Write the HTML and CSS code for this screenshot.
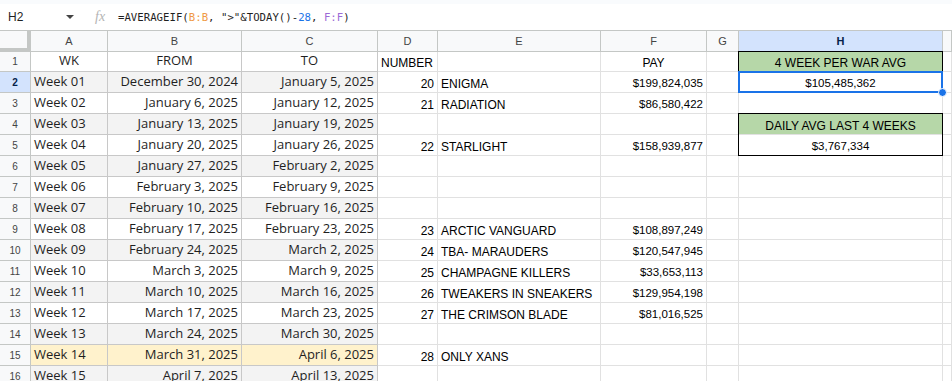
FILE: index.html
```html
<!DOCTYPE html>
<html lang="en">

<head>
    <meta charset="UTF-8">
    <title>Weeks</title>
    <link rel="stylesheet" href="styles.css">
</head>

<body>
    <div class="strip"></div>
    <div class="formula-bar">
        <div class="name-box">H2</div>
        <svg class="caret" width="8" height="4" viewBox="0 0 8 4"><path d="M0 0h8L4 4z" fill="#444"/></svg>
        <div class="fx">fx</div>
        <div class="formula">=AVERAGEIF(<span class="ref-b">B:B</span>, "&gt;"&amp;TODAY()-<span class="num">28</span>, <span class="ref-f">F:F</span>)</div>
    </div>

    <div class="sheet">
        <div class="row head">
            <div class="corner"></div>
            <div class="ch">A</div>
            <div class="ch">B</div>
            <div class="ch">C</div>
            <div class="ch">D</div>
            <div class="ch">E</div>
            <div class="ch">F</div>
            <div class="ch">G</div>
            <div class="ch sel">H</div>
            <div class="ch"></div>
        </div>

        <div class="row first">
            <div class="rh">1</div>
            <div class="c ac m">WK</div>
            <div class="c ac m">FROM</div>
            <div class="c ac m">TO</div>
            <div class="c caps">NUMBER</div>
            <div class="c"></div>
            <div class="c m caps">PAY</div>
            <div class="c"></div>
            <div class="c m caps green box-top">4 WEEK PER WAR AVG</div>
            <div class="c"></div>
        </div>
        <div class="row">
            <div class="rh cur">2</div>
            <div class="c ac band">Week 01</div>
            <div class="c ac band r">December 30, 2024</div>
            <div class="c ac band r">January 5, 2025</div>
            <div class="c r">20</div>
            <div class="c caps">ENIGMA</div>
            <div class="c r money">$199,824,035</div>
            <div class="c"></div>
            <div class="c m money active box-mid">$105,485,362<span class="handle"></span></div>
            <div class="c"></div>
        </div>
        <div class="row">
            <div class="rh">3</div>
            <div class="c ac">Week 02</div>
            <div class="c ac r">January 6, 2025</div>
            <div class="c ac r">January 12, 2025</div>
            <div class="c r">21</div>
            <div class="c caps">RADIATION</div>
            <div class="c r money">$86,580,422</div>
            <div class="c"></div>
            <div class="c"></div>
            <div class="c"></div>
        </div>
        <div class="row">
            <div class="rh">4</div>
            <div class="c ac band">Week 03</div>
            <div class="c ac band r">January 13, 2025</div>
            <div class="c ac band r">January 19, 2025</div>
            <div class="c"></div>
            <div class="c"></div>
            <div class="c"></div>
            <div class="c"></div>
            <div class="c m caps green box-top">DAILY AVG LAST 4 WEEKS</div>
            <div class="c"></div>
        </div>
        <div class="row">
            <div class="rh">5</div>
            <div class="c ac">Week 04</div>
            <div class="c ac r">January 20, 2025</div>
            <div class="c ac r">January 26, 2025</div>
            <div class="c r">22</div>
            <div class="c caps">STARLIGHT</div>
            <div class="c r money">$158,939,877</div>
            <div class="c"></div>
            <div class="c m money box-end">$3,767,334</div>
            <div class="c"></div>
        </div>
        <div class="row">
            <div class="rh">6</div>
            <div class="c ac band">Week 05</div>
            <div class="c ac band r">January 27, 2025</div>
            <div class="c ac band r">February 2, 2025</div>
            <div class="c"></div>
            <div class="c"></div>
            <div class="c"></div>
            <div class="c"></div>
            <div class="c"></div>
            <div class="c"></div>
        </div>
        <div class="row">
            <div class="rh">7</div>
            <div class="c ac">Week 06</div>
            <div class="c ac r">February 3, 2025</div>
            <div class="c ac r">February 9, 2025</div>
            <div class="c"></div>
            <div class="c"></div>
            <div class="c"></div>
            <div class="c"></div>
            <div class="c"></div>
            <div class="c"></div>
        </div>
        <div class="row">
            <div class="rh">8</div>
            <div class="c ac band">Week 07</div>
            <div class="c ac band r">February 10, 2025</div>
            <div class="c ac band r">February 16, 2025</div>
            <div class="c"></div>
            <div class="c"></div>
            <div class="c"></div>
            <div class="c"></div>
            <div class="c"></div>
            <div class="c"></div>
        </div>
        <div class="row">
            <div class="rh">9</div>
            <div class="c ac">Week 08</div>
            <div class="c ac r">February 17, 2025</div>
            <div class="c ac r">February 23, 2025</div>
            <div class="c r">23</div>
            <div class="c caps">ARCTIC VANGUARD</div>
            <div class="c r money">$108,897,249</div>
            <div class="c"></div>
            <div class="c"></div>
            <div class="c"></div>
        </div>
        <div class="row">
            <div class="rh">10</div>
            <div class="c ac band">Week 09</div>
            <div class="c ac band r">February 24, 2025</div>
            <div class="c ac band r">March 2, 2025</div>
            <div class="c r">24</div>
            <div class="c caps">TBA- MARAUDERS</div>
            <div class="c r money">$120,547,945</div>
            <div class="c"></div>
            <div class="c"></div>
            <div class="c"></div>
        </div>
        <div class="row">
            <div class="rh">11</div>
            <div class="c ac">Week 10</div>
            <div class="c ac r">March 3, 2025</div>
            <div class="c ac r">March 9, 2025</div>
            <div class="c r">25</div>
            <div class="c caps">CHAMPAGNE KILLERS</div>
            <div class="c r money">$33,653,113</div>
            <div class="c"></div>
            <div class="c"></div>
            <div class="c"></div>
        </div>
        <div class="row">
            <div class="rh">12</div>
            <div class="c ac band">Week 11</div>
            <div class="c ac band r">March 10, 2025</div>
            <div class="c ac band r">March 16, 2025</div>
            <div class="c r">26</div>
            <div class="c caps">TWEAKERS IN SNEAKERS</div>
            <div class="c r money">$129,954,198</div>
            <div class="c"></div>
            <div class="c"></div>
            <div class="c"></div>
        </div>
        <div class="row">
            <div class="rh">13</div>
            <div class="c ac">Week 12</div>
            <div class="c ac r">March 17, 2025</div>
            <div class="c ac r">March 23, 2025</div>
            <div class="c r">27</div>
            <div class="c caps">THE CRIMSON BLADE</div>
            <div class="c r money">$81,016,525</div>
            <div class="c"></div>
            <div class="c"></div>
            <div class="c"></div>
        </div>
        <div class="row">
            <div class="rh">14</div>
            <div class="c ac band">Week 13</div>
            <div class="c ac band r">March 24, 2025</div>
            <div class="c ac band r">March 30, 2025</div>
            <div class="c"></div>
            <div class="c"></div>
            <div class="c"></div>
            <div class="c"></div>
            <div class="c"></div>
            <div class="c"></div>
        </div>
        <div class="row">
            <div class="rh">15</div>
            <div class="c ac now">Week 14</div>
            <div class="c ac now r">March 31, 2025</div>
            <div class="c ac now r">April 6, 2025</div>
            <div class="c r">28</div>
            <div class="c caps">ONLY XANS</div>
            <div class="c"></div>
            <div class="c"></div>
            <div class="c"></div>
            <div class="c"></div>
        </div>
        <div class="row">
            <div class="rh">16</div>
            <div class="c ac band">Week 15</div>
            <div class="c ac band r">April 7, 2025</div>
            <div class="c ac band r">April 13, 2025</div>
            <div class="c"></div>
            <div class="c"></div>
            <div class="c"></div>
            <div class="c"></div>
            <div class="c"></div>
            <div class="c"></div>
        </div>
    </div>
</body>

</html>
```

FILE: styles.css
```css
* {
    margin: 0;
    padding: 0;
    box-sizing: border-box;
}

body {
    width: 952px;
    height: 381px;
    overflow: hidden;
    background: #fff;
    font-family: "Liberation Sans", Arial, sans-serif;
    color: #000;
}

/* formula bar */
.strip {
    height: 4px;
    background: #f9fbfd;
}

.formula-bar {
    display: flex;
    align-items: center;
    height: 26px;
}

.name-box {
    width: 66px;
    padding-left: 8px;
    font-size: 12px;
    color: #1f1f1f;
}

.caret {
    display: block;
}

.fx {
    width: 23px;
    margin-left: 21px;
    font-family: "Liberation Serif", serif;
    font-style: italic;
    font-size: 14px;
    color: #b4b4b4;
}

.formula {
    font-family: "DejaVu Sans Mono", monospace;
    font-size: 10.7px;
    color: #1f1f1f;
}

.ref-b { color: #f09a46; }
.num { color: #1a73e8; }
.ref-f { color: #9c6ad6; }

/* grid */
.row {
    display: grid;
    grid-template-columns: 31px 77px 134px 136px 60px 163px 106px 32px 204px 1fr;
    height: 21px;
}

.row.head {
    height: 22px;
    border-top: 1px solid #c4c7c5;
}

.row.first {
    height: 20px;
}

.corner {
    background: #f8f9fa;
    border-right: 4px solid #c4c7c5;
    border-bottom: 4px solid #c4c7c5;
}

.ch {
    display: flex;
    align-items: center;
    justify-content: center;
    background: #f8f9fa;
    border-right: 1px solid #c4c7c5;
    border-bottom: 1px solid #c4c7c5;
    font-size: 11px;
    color: #444;
}

.ch.sel {
    background: #d3e3fd;
    color: #041e49;
    font-weight: bold;
}

.rh {
    display: flex;
    align-items: center;
    justify-content: center;
    background: #f8f9fa;
    border-right: 1px solid #c4c7c5;
    border-bottom: 1px solid #c4c7c5;
    font-size: 10px;
    color: #444;
}

.rh.cur {
    background: #d3e3fd;
    color: #041e49;
    font-weight: bold;
}

.c {
    position: relative;
    display: flex;
    align-items: flex-end;
    padding: 0 3px 1px;
    border-right: 1px solid #e1e1e1;
    border-bottom: 1px solid #e1e1e1;
    white-space: nowrap;
    font-size: 12px;
    line-height: 14px;
}

.c.money {
    padding-bottom: 2px;
    font-size: 11.5px;
    line-height: 13px;
}

.c.r { justify-content: flex-end; }
.c.m { justify-content: center; }

/* week columns */
.c.ac {
    padding-bottom: 2px;
    border-color: #c8c8c8;
    font-family: "Open Sans", sans-serif;
    font-size: 13px;
    line-height: 17px;
    color: #1f1f1f;
}

.c.band { background: #f3f3f3; }
.c.now { background: #fff2cc; }
.c.green { background: #b6d7a8; }

/* black boxes in H */
.box-top::after,
.box-mid::after,
.box-end::after {
    content: "";
    position: absolute;
    top: -1px;
    left: -1px;
    right: -1px;
    bottom: -1px;
    border: 1px solid #000;
    pointer-events: none;
}

.box-top::after { border-bottom: none; }
.box-mid::after { border-top: none; border-bottom: none; }
.box-end::after { border-top: none; }

/* selection */
.active::before {
    content: "";
    position: absolute;
    top: -1px;
    left: -1px;
    right: -1px;
    bottom: -1px;
    border: 2px solid #1a73e8;
    z-index: 2;
}

.handle {
    position: absolute;
    right: -5px;
    bottom: -5px;
    width: 9px;
    height: 9px;
    border: 1px solid #fff;
    border-radius: 50%;
    background: #1a73e8;
    z-index: 3;
}
```
